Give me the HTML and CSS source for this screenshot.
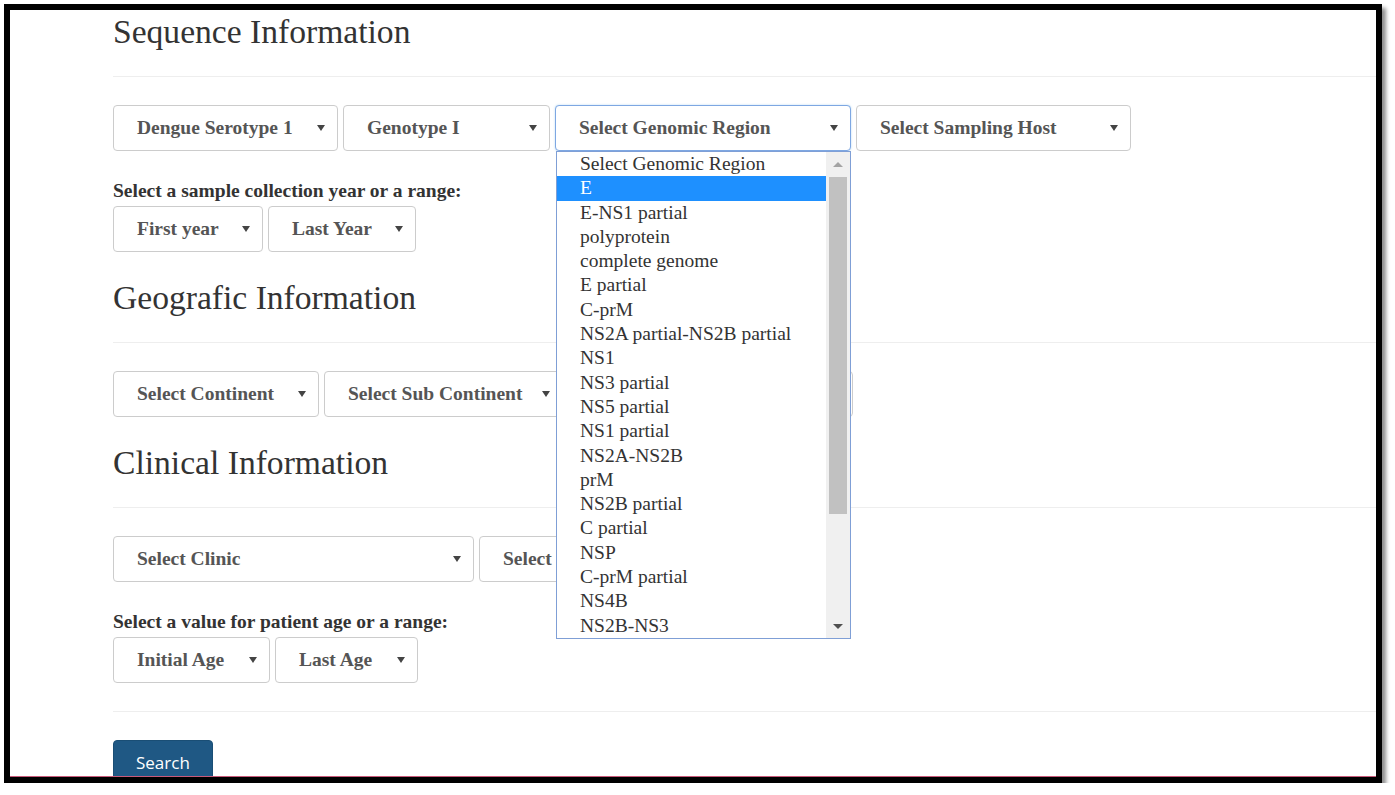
FILE: index.html
```html
<!DOCTYPE html>
<html>
<head>
<meta charset="utf-8">
<title>Search</title>
<link rel="stylesheet" href="styles.css">
</head>
<body>
<div class="frame">
  <div class="viewport">
    <div class="page">
      <h3 class="title first">Sequence Information</h3>
      <hr class="rule">
      <div class="row">
        <div class="sel w-serotype"><span>Dengue Serotype 1</span><i class="caret"></i></div>
        <div class="sel w-genotype"><span>Genotype I</span><i class="caret"></i></div>
        <div class="sel-wrap">
          <div class="sel w-region focus"><span>Select Genomic Region</span><i class="caret"></i></div>
          <div class="dd">
            <ul class="dd-list">
              <li>Select Genomic Region</li>
              <li class="hl">E</li>
              <li>E-NS1 partial</li>
              <li>polyprotein</li>
              <li>complete genome</li>
              <li>E partial</li>
              <li>C-prM</li>
              <li>NS2A partial-NS2B partial</li>
              <li>NS1</li>
              <li>NS3 partial</li>
              <li>NS5 partial</li>
              <li>NS1 partial</li>
              <li>NS2A-NS2B</li>
              <li>prM</li>
              <li>NS2B partial</li>
              <li>C partial</li>
              <li>NSP</li>
              <li>C-prM partial</li>
              <li>NS4B</li>
              <li>NS2B-NS3</li>
            </ul>
            <div class="dd-scroll">
              <div class="sb-btn"><i class="sb-up"></i></div>
              <div class="sb-thumb"></div>
              <div class="sb-fill"></div>
              <div class="sb-btn"><i class="sb-down"></i></div>
            </div>
          </div>
        </div>
        <div class="sel w-host"><span>Select Sampling Host</span><i class="caret"></i></div>
      </div>
      <p class="label">Select a sample collection year or a range:</p>
      <div class="row">
        <div class="sel w-first"><span>First year</span><i class="caret"></i></div>
        <div class="sel w-last"><span>Last Year</span><i class="caret"></i></div>
      </div>

      <h3 class="title">Geografic Information</h3>
      <hr class="rule">
      <div class="row">
        <div class="sel w-continent"><span>Select Continent</span><i class="caret"></i></div>
        <div class="sel w-sub"><span>Select Sub Continent</span><i class="caret"></i></div>
        <div class="sel w-country"><i class="caret"></i></div>
      </div>

      <h3 class="title">Clinical Information</h3>
      <hr class="rule">
      <div class="row">
        <div class="sel w-clinic"><span>Select Clinic</span><i class="caret"></i></div>
        <div class="sel w-symptom"><span>Select</span></div>
      </div>
      <p class="label">Select a value for patient age or a range:</p>
      <div class="row">
        <div class="sel w-initial"><span>Initial Age</span><i class="caret"></i></div>
        <div class="sel w-lastage"><span>Last Age</span><i class="caret"></i></div>
      </div>
      <hr class="rule last">
      <button class="btn">Search</button>
    </div>
  </div>
</div>
</body>
</html>
```

FILE: styles.css
```css
html, body {
  margin: 0;
  padding: 0;
  background: #ffffff;
}

.frame {
  margin: 4px 0 0 4px;
  width: 1378px;
  border: 6px solid #000;
  box-sizing: border-box;
  background: #fff;
  box-shadow: 4px 4px 4px rgba(0, 0, 0, 0.45);
}

.viewport {
  height: 766px;
  overflow: hidden;
  border-bottom: 1px solid #c85a7a;
}

.page {
  padding-left: 103px;
  font-family: "Liberation Serif", "Times New Roman", serif;
  color: #333;
}

.title {
  margin: 27px 0 0;
  font-size: 33.6px;
  line-height: 37px;
  font-weight: normal;
  color: #333;
}

.title.first {
  margin-top: 3px;
}

.rule {
  margin: 26px 0 28px;
  border: 0;
  border-top: 1px solid #eee;
  height: 0;
}

.rule.last {
  margin-top: 28px;
}

.label {
  margin: 29px 0 4px;
  font-weight: bold;
  font-size: 19.5px;
  line-height: 22px;
  color: #333;
}

.row {
  display: flex;
  gap: 5px;
  height: 46px;
}

.sel {
  box-sizing: border-box;
  height: 46px;
  display: flex;
  align-items: center;
  justify-content: space-between;
  padding: 0 12px 0 23px;
  border: 1px solid #ccc;
  border-radius: 4px;
  background: #fff;
  font-weight: bold;
  font-size: 19.5px;
  color: #555;
  white-space: nowrap;
  flex: none;
}

.sel.focus {
  border-color: #7ea7e2;
  box-shadow: 0 0 2px rgba(102, 175, 233, 0.5);
}

.caret {
  width: 0;
  height: 0;
  border-left: 4px solid transparent;
  border-right: 4px solid transparent;
  border-top: 6px solid #444;
}

.w-serotype { width: 225px; }
.w-genotype { width: 207px; }
.w-region { width: 296px; }
.w-host { width: 275px; }
.w-first { width: 150px; }
.w-last { width: 148px; }
.w-continent { width: 206px; }
.w-sub { width: 239px; }
.w-country { width: 285px; justify-content: flex-end; }
.w-clinic { width: 361px; }
.w-symptom { width: 300px; }
.w-initial { width: 157px; }
.w-lastage { width: 143px; }

.sel-wrap {
  position: relative;
  flex: none;
}

.dd {
  position: absolute;
  top: 46px;
  left: 1px;
  width: 295px;
  height: 488px;
  box-sizing: border-box;
  border: 1px solid #7f9fd6;
  background: #fff;
  display: flex;
  z-index: 10;
}

.dd-list {
  list-style: none;
  margin: 0;
  padding: 0;
  flex: 1;
}

.dd-list li {
  height: 24.3px;
  line-height: 24.3px;
  padding-left: 23px;
  font-size: 19.5px;
  color: #333;
  white-space: nowrap;
}

.dd-list li.hl {
  background: #1e90ff;
  color: #fff;
}

.dd-scroll {
  width: 24px;
  background: #f0f0f0;
  display: flex;
  flex-direction: column;
}

.sb-btn {
  height: 24px;
  display: flex;
  align-items: center;
  justify-content: center;
  flex: none;
}

.sb-up {
  width: 0;
  height: 0;
  border-left: 5px solid transparent;
  border-right: 5px solid transparent;
  border-bottom: 5px solid #a3a3a3;
}

.sb-down {
  width: 0;
  height: 0;
  border-left: 5px solid transparent;
  border-right: 5px solid transparent;
  border-top: 5px solid #505050;
}

.sb-thumb {
  margin: 1px 3px 0;
  height: 337px;
  background: #c1c1c1;
  flex: none;
}

.sb-fill {
  flex: 1;
}

.btn {
  display: block;
  width: 100px;
  height: 44px;
  padding: 0 0 0 22px;
  text-align: left;
  border: 1px solid #1a4e75;
  border-radius: 4px;
  background: #1f5884;
  color: #fff;
  font-family: "Open Sans", "Liberation Sans", sans-serif;
  font-size: 17px;
  line-height: 44px;
}
```
